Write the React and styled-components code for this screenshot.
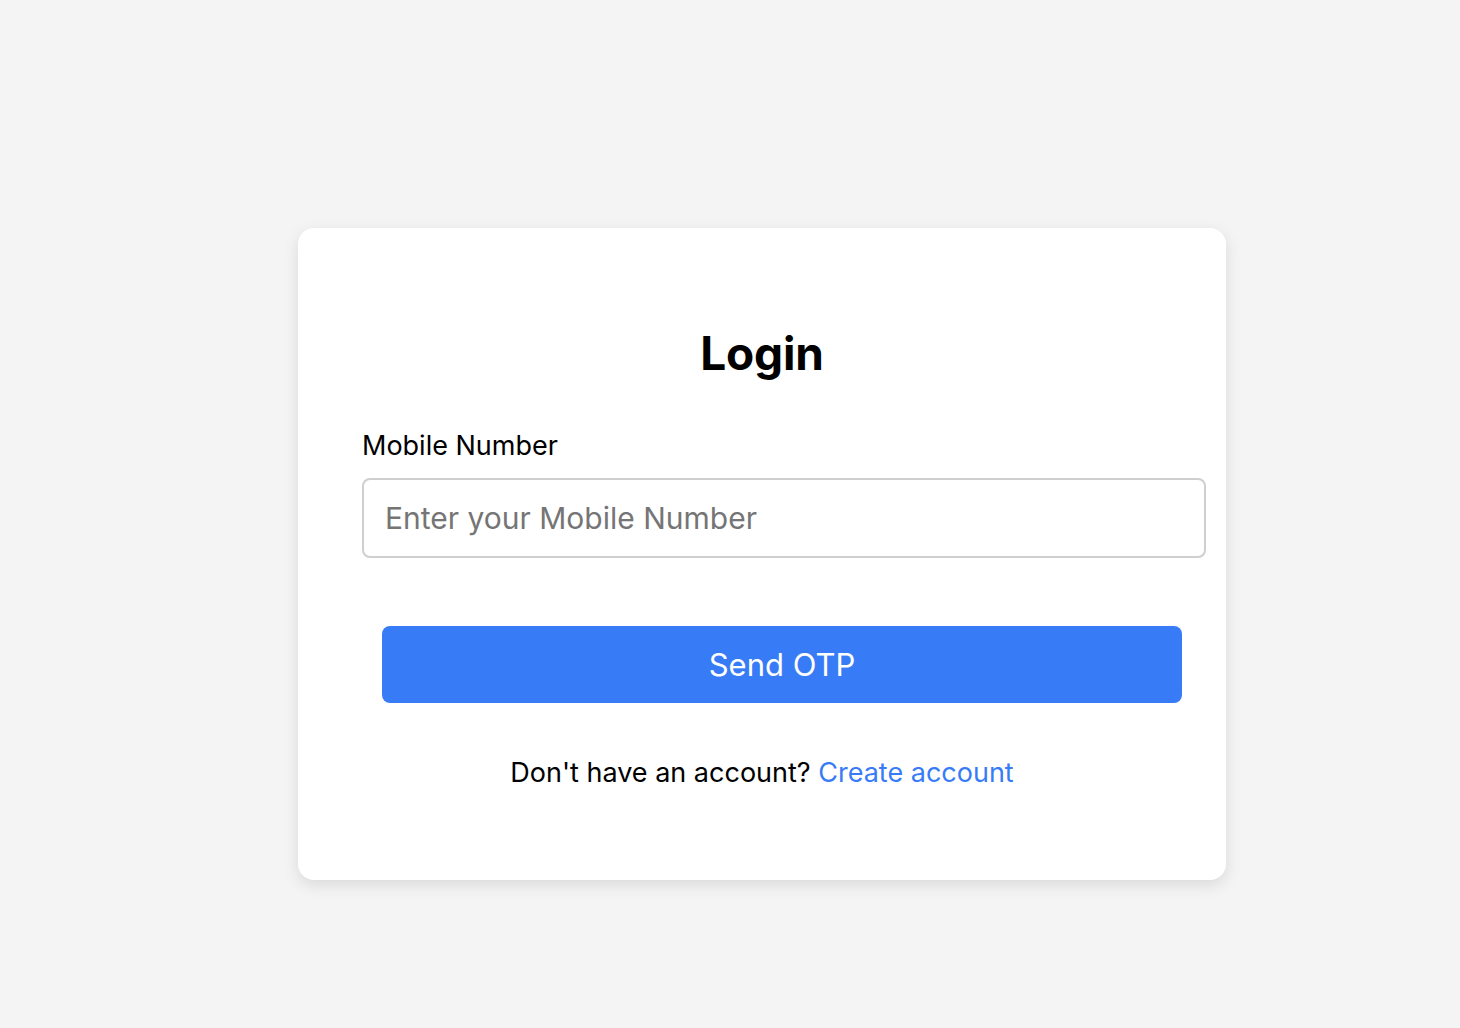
import React from 'react';
import styled, { createGlobalStyle } from 'styled-components';

const GlobalStyle = createGlobalStyle`
  * {
    box-sizing: border-box;
  }
  body {
    margin: 0;
    background-color: #f4f4f4;
    font-family: Inter, 'Noto Sans', 'Liberation Sans', sans-serif;
    color: #000;
  }
`;

const Page = styled.main`
  display: flex;
  justify-content: center;
  align-items: flex-start;
  min-height: 100vh;
  padding: 228px 0 0 64px;
  background-color: #f4f4f4;
`;

const Card = styled.section`
  width: 928px;
  padding: 64px 64px 91px;
  background-color: #fff;
  border-radius: 16px;
  box-shadow: 0 5px 16px rgba(0, 0, 0, 0.11);
`;

const Title = styled.h2`
  margin: 33px 0 0;
  font-size: 46px;
  line-height: 56px;
  font-weight: 700;
  text-align: center;
  letter-spacing: -0.2px;
`;

const Form = styled.form`
  display: flex;
  flex-direction: column;
  margin-top: 49px;
`;

const Label = styled.label`
  font-size: 27px;
  line-height: 32px;
  margin-bottom: 16px;
`;

const Input = styled.input`
  width: calc(100% + 44px);
  height: 80px;
  padding: 0 21px;
  border: 2px solid #cfcfcf;
  border-radius: 8px;
  font-family: inherit;
  font-size: 30px;
  color: #000;
  outline: none;
  &::placeholder {
    color: #757575;
  }
`;

const Button = styled.button`
  width: 100%;
  height: 77px;
  margin: 68px 0 0 20px;
  border: none;
  border-radius: 8px;
  background-color: #387bf6;
  color: #fff;
  font-family: inherit;
  font-size: 31px;
  cursor: pointer;
`;

const Footer = styled.p`
  margin: 54px 0 0;
  font-size: 27px;
  line-height: 32px;
  text-align: center;
`;

const LinkText = styled.a`
  color: #387bf6;
  text-decoration: none;
  cursor: pointer;
`;

export default function App() {
  return (
    <>
      <GlobalStyle />
      <Page>
        <Card>
          <Title>Login</Title>
          <Form onSubmit={e => e.preventDefault()}>
            <Label htmlFor="mobile">Mobile Number</Label>
            <Input id="mobile" type="tel" placeholder="Enter your Mobile Number" />
            <Button type="submit">Send OTP</Button>
          </Form>
          <Footer>
            Don't have an account? <LinkText>Create account</LinkText>
          </Footer>
        </Card>
      </Page>
    </>
  );
}
